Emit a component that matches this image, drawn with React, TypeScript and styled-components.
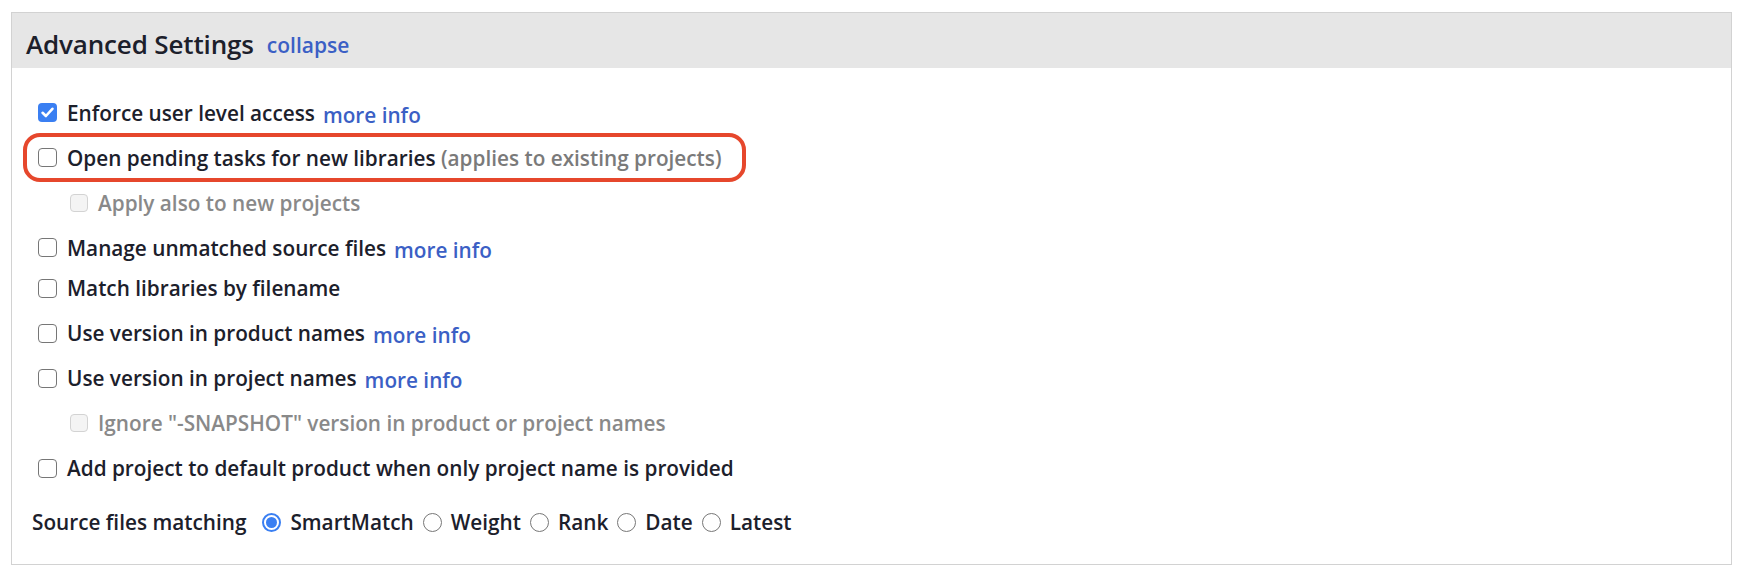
import React from "react";
import styled, { createGlobalStyle } from "styled-components";

const Global = createGlobalStyle`
  html, body { margin: 0; padding: 0; background: #ffffff; }
  body { font-family: "Open Sans", "Noto Sans", Arial, sans-serif; color: #1c202b; }
`;

const Page = styled.div`
  padding: 12px 12px 13px 11px;
`;

const Panel = styled.section`
  border: 1px solid #d2d2d2;
  background: #fff;
`;

const Header = styled.header`
  height: 55px;
  box-sizing: border-box;
  background: #e6e6e6;
  display: flex;
  align-items: center;
  gap: 13px;
  padding: 7px 14px 0;
`;

const Title = styled.h2`
  margin: 0;
  font-size: 26px;
  font-weight: 600;
  color: #1c202b;
  letter-spacing: -0.15px;
`;

const Link = styled.a<{ $size?: number; $drop?: number }>`
  font-size: ${(p) => p.$size ?? 20.75}px;
  font-weight: 600;
  color: #3b5fc5;
  text-decoration: none;
  padding-top: ${(p) => p.$drop ?? 0}px;
  cursor: pointer;
`;

const Body = styled.div`
  padding: 22px 0 19px;
  display: flex;
  flex-direction: column;
`;

const Row = styled.div<{ $indent?: boolean; $pull?: number; $mark?: boolean }>`
  position: relative;
  height: 45px;
  display: flex;
  align-items: center;
  padding-left: ${(p) => (p.$indent ? 58 : 26)}px;
  margin-top: ${(p) => p.$pull ?? 0}px;
  font-size: 20.75px;
  font-weight: 600;
  white-space: nowrap;

  ${(p) =>
    p.$mark &&
    `
    &::after {
      content: "";
      position: absolute;
      left: 11px;
      top: -2px;
      width: 723px;
      height: 49px;
      box-sizing: border-box;
      border: 4px solid #e6472c;
      border-radius: 17px;
      pointer-events: none;
    }
  `}
`;

const Box = styled.span<{ $checked?: boolean; $disabled?: boolean }>`
  flex: none;
  width: ${(p) => (p.$disabled ? 18 : 19)}px;
  height: ${(p) => (p.$disabled ? 18 : 19)}px;
  box-sizing: border-box;
  border-radius: 4px;
  margin-right: 10px;
  display: inline-flex;
  align-items: center;
  justify-content: center;
  background: ${(p) => (p.$checked ? "#3a7ff2" : p.$disabled ? "#f4f4f4" : "#fff")};
  border: ${(p) =>
    p.$checked ? "none" : p.$disabled ? "1.5px solid #d3d3d3" : "1.5px solid #767676"};
`;

const Label = styled.span<{ $muted?: boolean }>`
  color: ${(p) => (p.$muted ? "#898989" : "#1c202b")};
`;

const Note = styled.span`
  color: #7a7a7a;
`;

const Gap = styled.span`
  display: inline-block;
  width: 8px;
`;

const RadioRow = styled.div`
  height: 45px;
  margin-top: 9px;
  display: flex;
  align-items: center;
  padding-left: 20px;
  font-size: 20.75px;
  font-weight: 600;
  white-space: nowrap;
`;

const GroupLabel = styled.span`
  margin-right: 16px;
`;

const Option = styled.label`
  display: inline-flex;
  align-items: center;
  margin-right: 9px;
`;

const Dot = styled.span<{ $on?: boolean }>`
  flex: none;
  width: 19px;
  height: 19px;
  box-sizing: border-box;
  border-radius: 50%;
  margin-right: 9px;
  border: ${(p) => (p.$on ? "2px solid #3a7ff2" : "1.5px solid #777")};
  background: #fff;
  display: inline-flex;
  align-items: center;
  justify-content: center;

  &::after {
    content: "";
    display: ${(p) => (p.$on ? "block" : "none")};
    width: 11px;
    height: 11px;
    border-radius: 50%;
    background: #3a7ff2;
  }
`;

function Check({ checked, disabled }: { checked?: boolean; disabled?: boolean }) {
  return (
    <Box $checked={checked} $disabled={disabled}>
      {checked && (
        <svg width="13" height="11" viewBox="0 0 13 11">
          <path
            d="M1.6 5.8 L4.9 9 L11.4 1.8"
            fill="none"
            stroke="#fff"
            strokeWidth="2.6"
            strokeLinecap="round"
            strokeLinejoin="round"
          />
        </svg>
      )}
    </Box>
  );
}

export default function App() {
  return (
    <>
      <Global />
      <Page>
        <Panel>
          <Header>
            <Title>Advanced Settings</Title>
            <Link $size={21} $drop={2}>collapse</Link>
          </Header>
          <Body>
            <Row>
              <Check checked />
              <Label>Enforce user level access</Label>
              <Gap />
              <Link $drop={4}>more info</Link>
            </Row>
            <Row $mark>
              <Check />
              <Label>Open pending tasks for new libraries</Label>
              &nbsp;<Note>(applies to existing projects)</Note>
            </Row>
            <Row $indent>
              <Check disabled />
              <Label $muted>Apply also to new projects</Label>
            </Row>
            <Row>
              <Check />
              <Label>Manage unmatched source files</Label>
              <Gap />
              <Link $drop={4}>more info</Link>
            </Row>
            <Row $pull={-4.5}>
              <Check />
              <Label>Match libraries by filename</Label>
            </Row>
            <Row>
              <Check />
              <Label>Use version in product names</Label>
              <Gap />
              <Link $drop={4}>more info</Link>
            </Row>
            <Row>
              <Check />
              <Label>Use version in project names</Label>
              <Gap />
              <Link $drop={4}>more info</Link>
            </Row>
            <Row $indent>
              <Check disabled />
              <Label $muted>Ignore "-SNAPSHOT" version in product or project names</Label>
            </Row>
            <Row>
              <Check />
              <Label>Add project to default product when only project name is provided</Label>
            </Row>
            <RadioRow>
              <GroupLabel>Source files matching</GroupLabel>
              <Option><Dot $on />SmartMatch</Option>
              <Option><Dot />Weight</Option>
              <Option><Dot />Rank</Option>
              <Option><Dot />Date</Option>
              <Option><Dot />Latest</Option>
            </RadioRow>
          </Body>
        </Panel>
      </Page>
    </>
  );
}
